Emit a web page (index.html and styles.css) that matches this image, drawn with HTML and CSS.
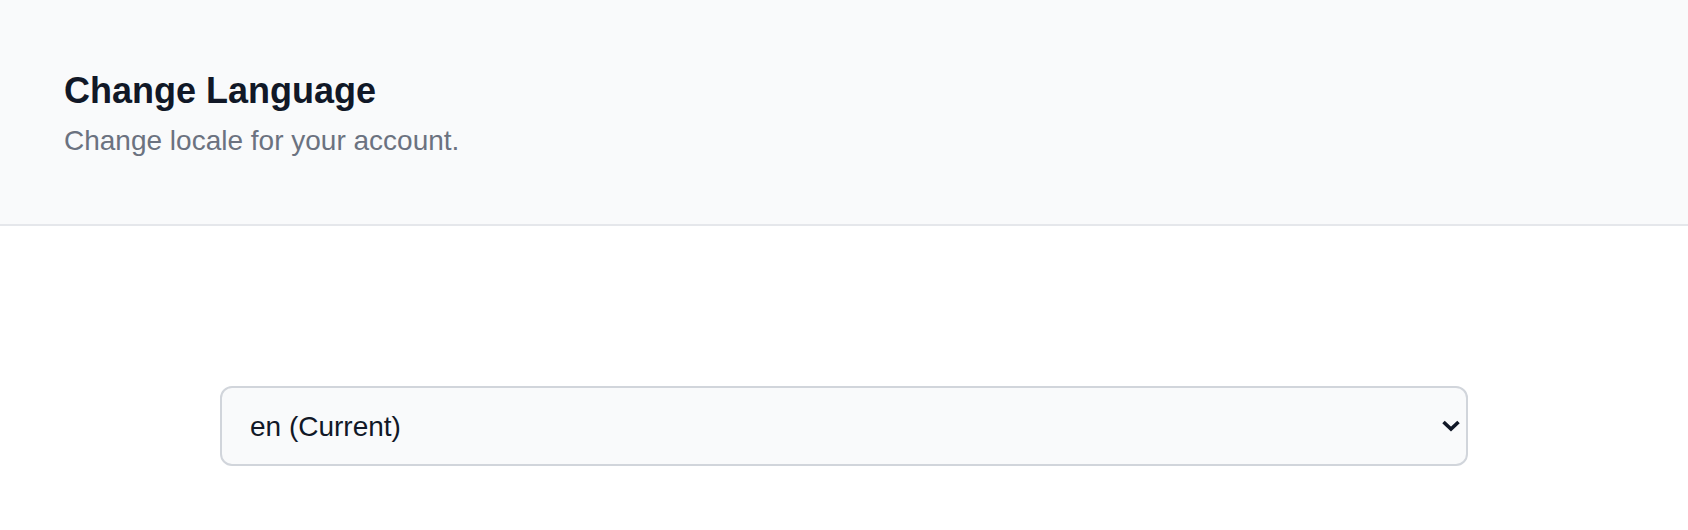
FILE: index.html
```html
<!DOCTYPE html>
<html lang="en">
<head>
    <meta charset="UTF-8">
    <meta name="viewport" content="width=device-width, initial-scale=1.0">
    <title>Change Language</title>
    <link rel="stylesheet" href="styles.css">
</head>
<body>

    <!-- Section header -->
    <div class="section-header">
        <h3 class="section-title">Change Language</h3>
        <p class="section-description">Change locale for your account.</p>
    </div>

    <!-- Locale picker -->
    <div class="section-body">
        <div class="select-wrap">
            <select class="locale-select" name="locale">
                <option value="en" selected>en (Current)</option>
            </select>
            <svg class="select-arrow" width="20" height="13" viewBox="0 0 20 13" aria-hidden="true">
                <polyline points="2.5,2.5 10,9.5 17.5,2.5" fill="none" stroke="#111827" stroke-width="3.6" stroke-linejoin="miter" />
            </svg>
        </div>
    </div>

</body>
</html>
```

FILE: styles.css
```css
body, html {
    margin: 0;
    background-color: #ffffff;
    font-family: 'Liberation Sans', Arial, sans-serif;
    color: #111827;
}

.section-header {
    background-color: #f9fafb;
    border-bottom: 2px solid #e5e7eb;
    padding: 63px 64px 63px;
}

.section-title {
    margin: 0;
    font-size: 36px;
    line-height: 56px;
    font-weight: 700;
    color: #111827;
}

.section-description {
    margin: 2px 0 0;
    font-size: 28px;
    line-height: 40px;
    color: #6b7280;
}

.section-body {
    padding: 160px 64px 60px;
}

.select-wrap {
    position: relative;
    width: 80%;
    margin: 0 auto;
}

.locale-select {
    display: block;
    width: 100%;
    height: 80px;
    box-sizing: border-box;
    padding: 0 60px 0 28px;
    font-family: inherit;
    font-size: 28px;
    color: #111827;
    background-color: #f9fafb;
    border: 2px solid #d1d5db;
    border-radius: 12px;
    appearance: none;
    -webkit-appearance: none;
    outline: none;
}

.select-arrow {
    position: absolute;
    right: 7px;
    top: 50%;
    transform: translateY(-50%);
    pointer-events: none;
}
```
